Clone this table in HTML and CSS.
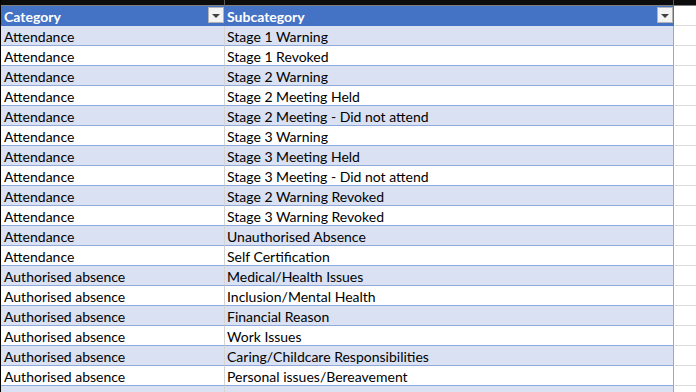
FILE: index.html
```html
<!DOCTYPE html>
<html lang="en">
<head>
<meta charset="utf-8">
<title>Category table</title>
<link rel="stylesheet" href="styles.css">
</head>
<body>
<div class="sheet">
  <div class="row top">
    <div class="cell a"></div><div class="cell b"></div><div class="cell c"></div>
  </div>
  <div class="row head">
    <div class="cell a"><span>Category</span><span class="filter"><i></i></span></div>
    <div class="cell b"><span>Subcategory</span><span class="filter"><i></i></span></div>
    <div class="cell c"></div>
  </div>
  <div class="row band"><div class="cell a">Attendance</div><div class="cell b">Stage 1 Warning</div><div class="cell c"></div></div>
  <div class="row"><div class="cell a">Attendance</div><div class="cell b">Stage 1 Revoked</div><div class="cell c"></div></div>
  <div class="row band"><div class="cell a">Attendance</div><div class="cell b">Stage 2 Warning</div><div class="cell c"></div></div>
  <div class="row"><div class="cell a">Attendance</div><div class="cell b">Stage 2 Meeting Held</div><div class="cell c"></div></div>
  <div class="row band"><div class="cell a">Attendance</div><div class="cell b">Stage 2 Meeting - Did not attend</div><div class="cell c"></div></div>
  <div class="row"><div class="cell a">Attendance</div><div class="cell b">Stage 3 Warning</div><div class="cell c"></div></div>
  <div class="row band"><div class="cell a">Attendance</div><div class="cell b">Stage 3 Meeting Held</div><div class="cell c"></div></div>
  <div class="row"><div class="cell a">Attendance</div><div class="cell b">Stage 3 Meeting - Did not attend</div><div class="cell c"></div></div>
  <div class="row band"><div class="cell a">Attendance</div><div class="cell b">Stage 2 Warning Revoked</div><div class="cell c"></div></div>
  <div class="row"><div class="cell a">Attendance</div><div class="cell b">Stage 3 Warning Revoked</div><div class="cell c"></div></div>
  <div class="row band"><div class="cell a">Attendance</div><div class="cell b">Unauthorised Absence</div><div class="cell c"></div></div>
  <div class="row"><div class="cell a">Attendance</div><div class="cell b">Self Certification</div><div class="cell c"></div></div>
  <div class="row band"><div class="cell a">Authorised absence</div><div class="cell b">Medical/Health Issues</div><div class="cell c"></div></div>
  <div class="row"><div class="cell a">Authorised absence</div><div class="cell b">Inclusion/Mental Health</div><div class="cell c"></div></div>
  <div class="row band"><div class="cell a">Authorised absence</div><div class="cell b">Financial Reason</div><div class="cell c"></div></div>
  <div class="row"><div class="cell a">Authorised absence</div><div class="cell b">Work Issues</div><div class="cell c"></div></div>
  <div class="row band"><div class="cell a">Authorised absence</div><div class="cell b">Caring/Childcare Responsibilities</div><div class="cell c"></div></div>
  <div class="row"><div class="cell a">Authorised absence</div><div class="cell b">Personal issues/Bereavement</div><div class="cell c"></div></div>
  <div class="row band"><div class="cell a">Conduct</div><div class="cell b"></div><div class="cell c"></div></div>
</div>
</body>
</html>
```

FILE: styles.css
```css
html, body {
  margin: 0;
  padding: 0;
  background: #ffffff;
  overflow: hidden;
}

.sheet {
  width: 696px;
  height: 392px;
  overflow: hidden;
  font-family: "Lato", "Open Sans", sans-serif;
  font-size: 14px;
  color: #000000;
  border-left: 1px solid #000000;
  box-sizing: border-box;
}

.row {
  display: grid;
  grid-template-columns: 224px 449px 1fr;
  height: 20px;
}

.cell {
  box-sizing: border-box;
  height: 20px;
  line-height: 21px;
  white-space: nowrap;
  overflow: hidden;
  border-bottom: 1px solid #8ea9db;
}

.cell.a {
  padding-left: 3px;
  border-right: 1px solid #d4d4d4;
}

.cell.b {
  padding-left: 2px;
  border-right: 1px solid #8ea9db;
}

.cell.c {
  background: #ffffff;
  border-bottom: 1px solid #dadada;
  margin-left: 1px;
}

.band .cell.a,
.band .cell.b {
  background: #d9e1f2;
}

/* black strip above the header */
.row.top {
  height: 6px;
}
.row.top .cell {
  height: 6px;
  background: #0c0c0c;
  border-bottom: 1px solid #7f7f7f;
}
.row.top .cell.a,
.row.top .cell.b {
  border-right: 1px solid #5a5a5a;
}
.row.top .cell.c {
  margin-left: 0;
}

/* header row */
.row.head .cell.a,
.row.head .cell.b {
  background: #4472c4;
  color: #ffffff;
  font-weight: bold;
  display: flex;
  align-items: flex-start;
  justify-content: space-between;
  border-bottom: 0;
  border-right: 1px solid #4472c4;
  padding-right: 0;
}
.row.head .cell.a span:first-child,
.row.head .cell.b span:first-child {
  line-height: 21px;
}
.row.head .cell.c {
  border-bottom: 1px solid #dadada;
}

.filter {
  width: 16px;
  height: 16px;
  box-sizing: border-box;
  background: #f3f3f3;
  border: 1px solid #b4b4b4;
  display: flex;
  align-items: center;
  justify-content: center;
  margin-top: 1px;
}
.filter i {
  display: block;
  width: 0;
  height: 0;
  border-left: 4px solid transparent;
  border-right: 4px solid transparent;
  border-top: 4px solid #404040;
  margin-top: 1px;
}
```
